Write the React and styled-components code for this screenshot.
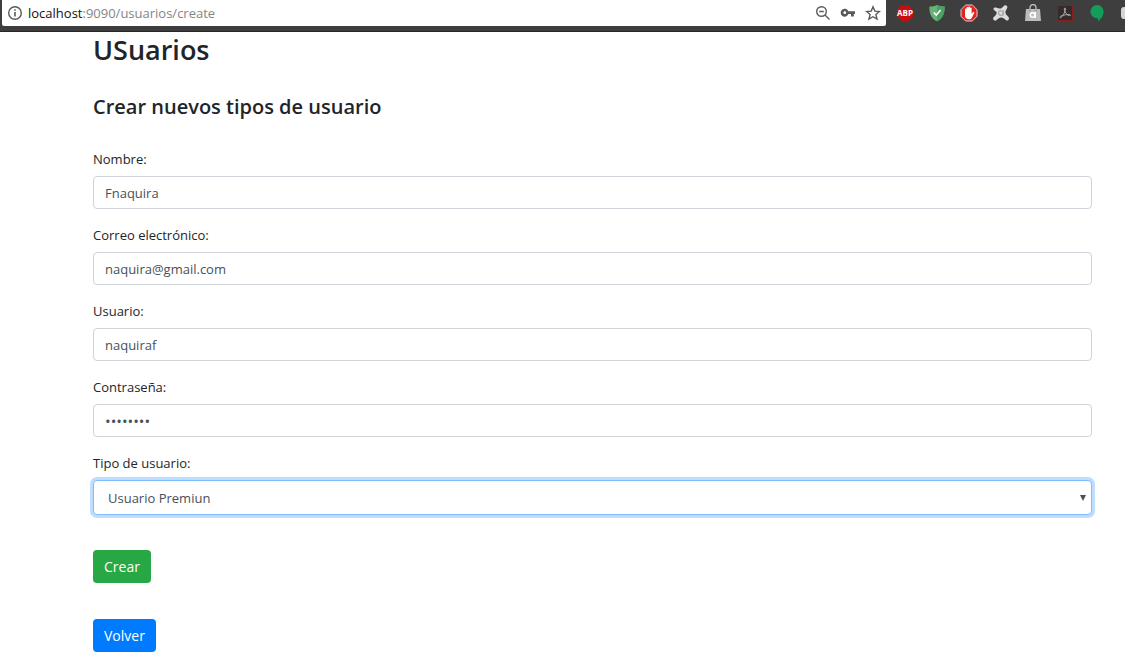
import React from "react";
import styled, { createGlobalStyle } from "styled-components";

const GlobalStyle = createGlobalStyle`
  *, *::before, *::after { box-sizing: border-box; }
  body {
    margin: 0;
    background: #fff;
    color: #212529;
    font: 400 14px/22px "Segoe UI", "Open Sans", "Noto Sans", sans-serif;
  }
`;

const Toolbar = styled.header`
  display: flex;
  align-items: flex-start;
  height: 32px;
  padding-left: 2px;
  background: #3e3e3e;
  border-bottom: 1px solid #272727;
  overflow: hidden;
`;

const AddressBar = styled.div`
  flex: 1;
  min-width: 0;
  display: flex;
  align-items: center;
  gap: 5px;
  height: 26px;
  padding: 0 5px;
  background: #fff;
  border-radius: 0 0 2px 2px;
  color: #5a5a5a;
`;

const Url = styled.div`
  flex: 1;
  min-width: 0;
  font-size: 13px;
  line-height: 26px;
  color: #858585;
  white-space: nowrap;
`;

const Host = styled.span`
  color: #111;
`;

const BarActions = styled.div`
  display: flex;
  gap: 9px;
`;

const IconButton = styled.button`
  display: flex;
  padding: 0;
  border: 0;
  background: none;
  color: inherit;
`;

const Extensions = styled.div`
  flex: none;
  display: flex;
  align-items: center;
  gap: 14px;
  width: 239px;
  height: 26px;
  padding-left: 10px;
  overflow: hidden;
`;

const Glyph = styled.svg`
  flex: none;
  display: block;
  width: ${(p) => p.$size}px;
  height: ${(p) => p.$size}px;
`;

const Page = styled.main`
  padding: 0 33px 10px 93px;
`;

const Title = styled.h1`
  margin: 0;
  font-size: 27px;
  line-height: 36px;
  font-weight: 600;
`;

const Subtitle = styled.h2`
  margin: 24px 0 26px;
  font-size: 20px;
  line-height: 30px;
  font-weight: 600;
`;

const Field = styled.div`
  display: flex;
  flex-direction: column;
  gap: 6px;
  margin-bottom: 15px;
`;

const Label = styled.label`
  font-size: 13px;
  line-height: 22px;
`;

const Input = styled.input`
  width: 100%;
  height: 33px;
  padding: 0 11px;
  border: 1px solid #ced4da;
  border-radius: 4px;
  background: #fff;
  color: #495057;
  font: inherit;
  font-size: ${(p) => (p.type === "password" ? 15 : 13)}px;
  outline: 0;
`;

const SelectWrap = styled.div`
  display: grid;
  align-items: center;
  > * { grid-area: 1 / 1; }
`;

const Select = styled.select`
  appearance: none;
  width: 100%;
  height: 35px;
  padding: 0 14px;
  border: 1px solid #80bdff;
  border-radius: 4px;
  box-shadow: 0 0 0 3px #bfdeff;
  background: #fff;
  color: #495057;
  font: inherit;
  font-size: 13px;
  outline: 0;
`;

const Arrow = styled.svg`
  justify-self: end;
  width: 6px;
  height: 6px;
  margin-right: 6px;
  pointer-events: none;
`;

const Actions = styled.div`
  display: flex;
  flex-direction: column;
  align-items: flex-start;
  gap: 36px;
  padding-top: 20px;
`;

const Button = styled.button`
  height: 33px;
  padding: 0 11px;
  border: 0;
  border-radius: 4px;
  background: ${(p) => p.$color};
  color: #fff;
  font: inherit;
  font-size: 14px;
`;

const fields = [
  { id: "nombre", label: "Nombre:", type: "text", value: "Fnaquira" },
  { id: "correo", label: "Correo electrónico:", type: "email", value: "naquira@gmail.com" },
  { id: "usuario", label: "Usuario:", type: "text", value: "naquiraf" },
  { id: "contrasena", label: "Contraseña:", type: "password", value: "naquiraf" },
];

function InfoIcon() {
  return (
    <Glyph $size={16} viewBox="0 0 16 16" fill="none" stroke="currentColor" strokeWidth="1.4">
      <circle cx="8" cy="8" r="6.3" />
      <path d="M8 7v4.4M8 4.3v1.5" strokeWidth="1.6" />
    </Glyph>
  );
}

function ZoomOutIcon() {
  return (
    <Glyph $size={16} viewBox="0 0 16 16" fill="none" stroke="currentColor" strokeWidth="1.4">
      <circle cx="6.5" cy="6.5" r="4.8" />
      <path d="M10 10l4.5 4.5M4.2 6.5h4.6" />
    </Glyph>
  );
}

function KeyIcon() {
  return (
    <Glyph $size={16} viewBox="0 0 16 16" fill="currentColor">
      <path
        fillRule="evenodd"
        d="M8.4 6.3A4 4 0 1 0 8.4 9.1H11V11.6H13.8V9.1H15V6.3ZM4.8 6.3a1.4 1.4 0 1 1 0 2.8a1.4 1.4 0 0 1 0-2.8Z"
      />
    </Glyph>
  );
}

function StarIcon() {
  return (
    <Glyph $size={16} viewBox="0 0 16 16" fill="none" stroke="currentColor" strokeWidth="1.4">
      <path d="M8 1.8l1.8 4.3 4.6.4-3.5 3 1.1 4.6L8 11.7l-4 2.4 1.1-4.6-3.5-3 4.6-.4z" />
    </Glyph>
  );
}

function AdblockPlusIcon() {
  return (
    <Glyph $size={18} viewBox="0 0 18 18">
      <path d="M5.7 1h6.6L17 5.7v6.6L12.300 17H5.7L1 12.3V5.700z" fill="#c70d12" />
      <text x="9" y="11.8" textAnchor="middle" fontFamily="Open Sans, sans-serif" fontWeight="700" fontSize="8" fill="#fff">
        ABP
      </text>
    </Glyph>
  );
}

function ShieldIcon() {
  return (
    <Glyph $size={18} viewBox="0 0 18 18">
      <path d="M9 1c2.500 1.200 5 1.500 7.600 1.500C16.800 10 14.500 14.700 9 17.300C3.500 14.700 1.200 10 1.400 2.500C4 2.500 6.500 2.200 9 1z" fill="#67b279" />
      <path d="M9 1c2.500 1.200 5 1.500 7.600 1.500C16.800 10 14.500 14.700 9 17.300z" fill="#4ba064" />
      <path d="M5.800 8.500l2.500 2.600 4.300-5" fill="none" stroke="#fff" strokeWidth="1.600" />
    </Glyph>
  );
}

function HandIcon() {
  return (
    <Glyph $size={18} viewBox="0 0 18 18">
      <path d="M5.700 1h6.600L17 5.700v6.600L12.300 17H5.700L1 12.300V5.700z" fill="#e5231f" stroke="#f3c5c3" />
      <path
        d="M5 9V5.300a.8.8 0 0 1 1.600 0V8V3.900a.8.8 0 0 1 1.700 0V8V3.400a.8.8 0 0 1 1.700 0V8V4.300a.8.8 0 0 1 1.600 0v5.600l1.300-1.600c.6-.7 1.700-.2 1.300.6l-2.200 4.500C11.500 14.800 10.600 15.200 9 15.200C6.200 15.200 5 13.700 5 11z"
        fill="#fff"
      />
    </Glyph>
  );
}

function AvastIcon() {
  return (
    <Glyph $size={18} viewBox="0 0 18 18">
      <path
        d="M2.200 3.800C3.500 3.200 5.500 4.300 7.400 4.500C9.500 4.600 10.600 3.400 11.700 1.900C13 .2 16.200 1.500 15.200 3.900C14.300 5.800 13.200 7.300 13.400 8.800C13.700 10.700 15.300 11.500 16.500 13C18 15.400 15.500 17.500 13.700 16C12.200 14.600 10.900 13.700 9.200 13.600C7.500 13.600 6.200 14.500 4.600 16.100C2.800 17.700 0 15.500 1.600 13.300C3 11.600 4.500 11 4.700 9.300C4.800 7.800 3.600 7.200 2.300 6.300C1.300 5.600 1.300 4.300 2.200 3.800z"
        fill="#dcdcdc"
      />
      <circle cx="8.800" cy="9" r="2.300" fill="none" stroke="#aaa" strokeWidth="1.200" />
      <path d="M11.300 6.500v5" stroke="#aaa" strokeWidth="1.200" />
    </Glyph>
  );
}

function BagIcon() {
  return (
    <Glyph $size={18} viewBox="0 0 18 18">
      <path d="M6 6V3.600a3 3 0 0 1 6 0V6" fill="none" stroke="#bdbdbd" strokeWidth="1.300" />
      <path d="M2 5h14l1 12H1z" fill="#bcbcbc" />
      <circle cx="8.600" cy="11" r="2.300" fill="none" stroke="#fff" strokeWidth="1.500" />
      <path d="M11.200 8v6" stroke="#fff" strokeWidth="1.500" />
      <path d="M5.500 6.500h1M11.500 6.500h1" stroke="#666" />
    </Glyph>
  );
}

function AcrobatIcon() {
  return (
    <Glyph $size={18} viewBox="0 0 18 18">
      <rect x="1.500" y="1.500" width="15" height="15" fill="#352b2b" stroke="#8e1c18" />
      <path
        d="M4.200 13.700C2.700 12.800 6.200 10.700 13 10.500C15.800 10.600 14.200 12.700 11.800 11C9.200 9 8.300 6.500 8.300 5C8.300 3.500 9.700 3.500 9.500 5.200C9.100 8.400 5.500 14.500 4.200 13.700z"
        fill="none"
        stroke="#aaa"
      />
    </Glyph>
  );
}

function HangoutsIcon() {
  return (
    <Glyph $size={18} viewBox="0 0 18 18">
      <path d="M9 1a6.600 6.600 0 0 1 6.600 6.600C15.600 12 13 15 10 17.300V14.200H9A6.600 6.600 0 0 1 9 1z" fill="#129d58" />
    </Glyph>
  );
}

function ClippedIcon() {
  return (
    <Glyph $size={18} viewBox="0 0 18 18">
      <rect x="1" y="3" width="16" height="12" rx="3" fill="#d5d5d5" />
    </Glyph>
  );
}

const extensionIcons = [
  ["Adblock Plus", AdblockPlusIcon],
  ["AdGuard", ShieldIcon],
  ["AdBlock", HandIcon],
  ["Avast Online Security", AvastIcon],
  ["Avast SafePrice", BagIcon],
  ["Adobe Acrobat", AcrobatIcon],
  ["Hangouts", HangoutsIcon],
  ["Más", ClippedIcon],
];

export default function App() {
  return (
    <>
      <GlobalStyle />
      <Toolbar>
        <AddressBar>
          <IconButton aria-label="Información del sitio"><InfoIcon /></IconButton>
          <Url><Host>localhost</Host>:9090/usuarios/create</Url>
          <BarActions>
            <IconButton aria-label="Alejar"><ZoomOutIcon /></IconButton>
            <IconButton aria-label="Contraseñas"><KeyIcon /></IconButton>
            <IconButton aria-label="Favorito"><StarIcon /></IconButton>
          </BarActions>
        </AddressBar>
        <Extensions>
          {extensionIcons.map(([name, Icon]) => (
            <IconButton key={name} aria-label={name}><Icon /></IconButton>
          ))}
        </Extensions>
      </Toolbar>
      <Page>
        <Title>USuarios</Title>
        <Subtitle>Crear nuevos tipos de usuario</Subtitle>
        <form onSubmit={(e) => e.preventDefault()}>
          {fields.map((f) => (
            <Field key={f.id}>
              <Label htmlFor={f.id}>{f.label}</Label>
              <Input id={f.id} type={f.type} defaultValue={f.value} />
            </Field>
          ))}
          <Field>
            <Label htmlFor="tipo">Tipo de usuario:</Label>
            <SelectWrap>
              <Select id="tipo" defaultValue="premium">
                <option value="premium">Usuario Premiun</option>
              </Select>
              <Arrow viewBox="0 0 6 6"><path d="M0 0h6L3 6z" fill="#495057" /></Arrow>
            </SelectWrap>
          </Field>
          <Actions>
            <Button type="submit" $color="#28a745">Crear</Button>
            <Button type="button" $color="#007bff">Volver</Button>
          </Actions>
        </form>
      </Page>
    </>
  );
}
